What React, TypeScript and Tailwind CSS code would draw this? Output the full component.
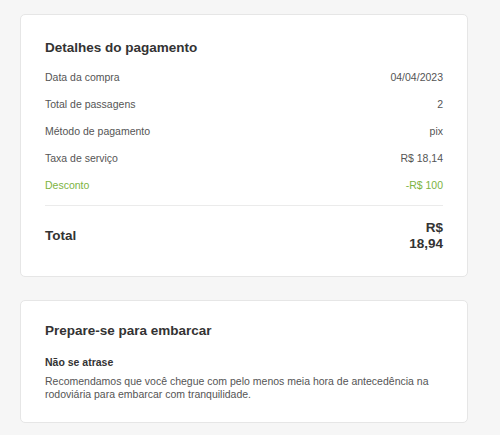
import React from 'react';

interface DetailRow {
  label: string;
  value: string;
  highlight?: boolean;
}

const paymentRows: DetailRow[] = [
  { label: 'Data da compra', value: '04/04/2023' },
  { label: 'Total de passagens', value: '2' },
  { label: 'Método de pagamento', value: 'pix' },
  { label: 'Taxa de serviço', value: 'R$ 18,14' },
  { label: 'Desconto', value: '-R$ 100', highlight: true },
];

const Card: React.FC<{ children: React.ReactNode; className?: string }> = ({ children, className = '' }) => (
  <div className={`w-[448px] ml-[20px] bg-white border border-[#e6e6e6] rounded-[5px] px-[24px] ${className}`}>
    {children}
  </div>
);

const App: React.FC = () => {
  return (
    <div
      className="min-h-[435px] w-[500px] bg-[#f6f6f6] pt-[14px] pb-[12px] text-[#555]"
      style={{ fontFamily: '"Liberation Sans", Arial, sans-serif' }}
    >
      {/* Payment summary */}
      <Card className="pt-[24px] pb-[24px]">
        <h2 className="text-[13.5px] leading-[18px] font-bold text-[#333]">Detalhes do pagamento</h2>
        <div className="mt-[13px] flex flex-col gap-[13px]">
          {paymentRows.map(row => (
            <div
              key={row.label}
              className={`flex justify-between text-[10.5px] leading-[14px] ${row.highlight ? 'text-[#7cb342]' : ''}`}
            >
              <span>{row.label}</span>
              <span>{row.value}</span>
            </div>
          ))}
        </div>
        <div className="mt-[13px] border-t border-[#ebebeb]" />
        <div className="mt-[14px] flex justify-between items-center text-[13.5px] leading-[16px] font-bold text-[#333]">
          <span>Total</span>
          <span className="w-[36px] text-right">R$ 18,94</span>
        </div>
      </Card>

      {/* Boarding tips */}
      <Card className="mt-[23px] pt-[21px] pb-[21px]">
        <h2 className="text-[13.5px] leading-[18px] font-bold text-[#333]">Prepare-se para embarcar</h2>
        <h3 className="mt-[15px] text-[10.5px] leading-[14px] font-bold text-[#333]">Não se atrase</h3>
        <p className="mt-[6px] text-[10.5px] leading-[13px]">
          Recomendamos que você chegue com pelo menos meia hora de antecedência na rodoviária para embarcar com
          tranquilidade.
        </p>
      </Card>
    </div>
  );
};

export default App;
